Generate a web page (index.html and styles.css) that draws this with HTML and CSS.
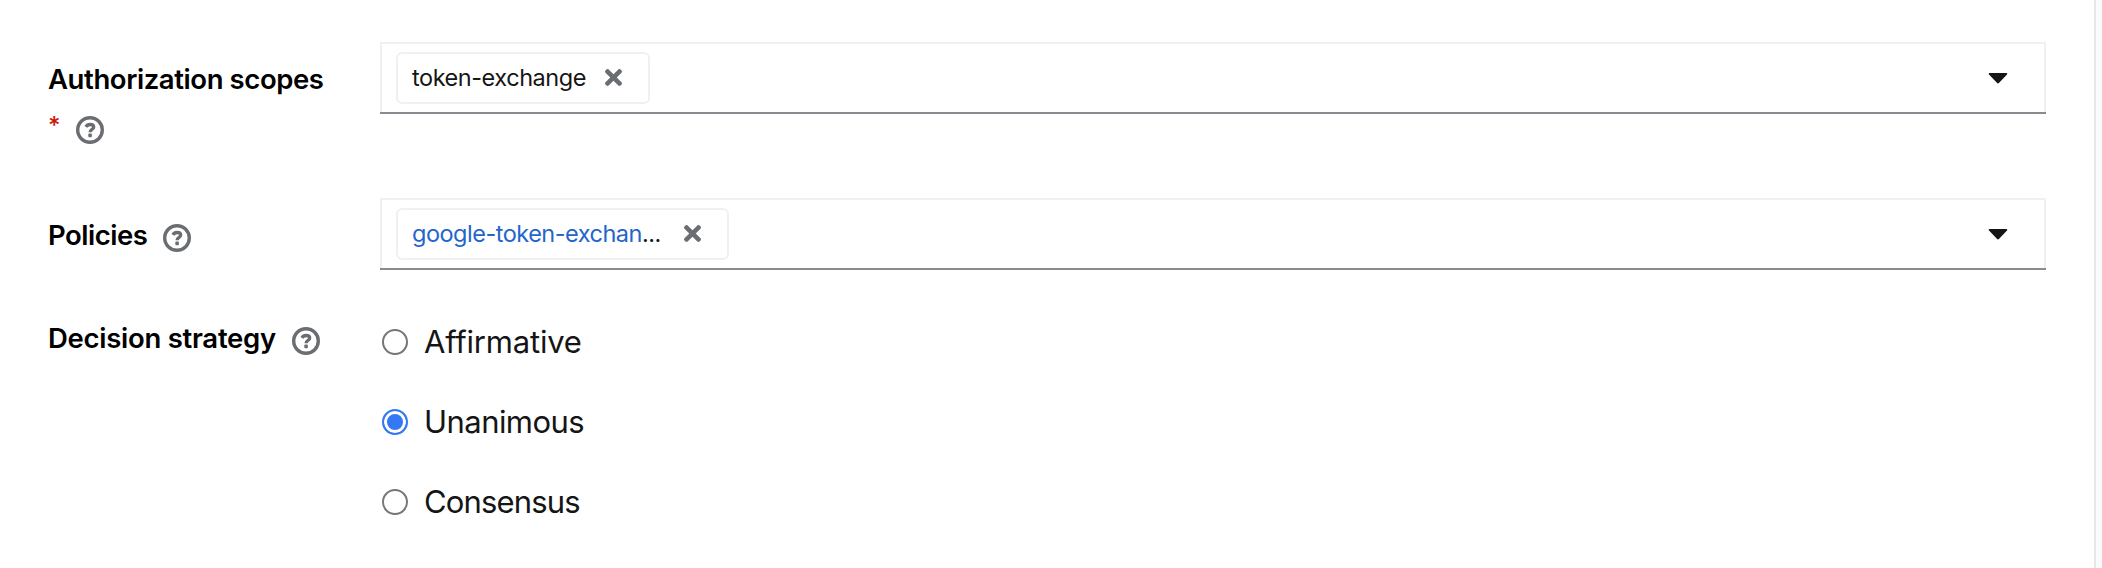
FILE: index.html
```html
<!DOCTYPE html>
<html lang="en">
<head>
<meta charset="utf-8">
<title>Permission details</title>
<link rel="stylesheet" href="styles.css">
</head>
<body>
<svg class="symbols" aria-hidden="true">
  <symbol id="help" viewBox="0 0 28 28">
    <circle cx="14" cy="14" r="12.3" fill="none" stroke="currentColor" stroke-width="3.4"/>
    <path d="M9.9 10.9C10.8 9.3 12.1 8.5 14.1 8.5C16.3 8.5 17.7 9.5 17.7 11.1C17.7 13.6 14.1 13.3 14.1 16.2" fill="none" stroke="currentColor" stroke-width="3.3"/>
    <rect x="12.3" y="17.6" width="3.6" height="3.6" rx="1" fill="currentColor"/>
  </symbol>
  <symbol id="close" viewBox="0 0 352 352">
    <path transform="translate(0 -80)" fill="currentColor" d="M242.72 256l100.07-100.07c12.28-12.28 12.28-32.19 0-44.48l-22.24-22.24c-12.28-12.28-32.19-12.28-44.48 0L176 189.28 75.93 89.21c-12.28-12.28-32.19-12.28-44.48 0L9.21 111.45c-12.28 12.28-12.28 32.19 0 44.48L109.28 256 9.21 356.07c-12.28 12.28-12.28 32.19 0 44.48l22.24 22.24c12.28 12.28 32.2 12.28 44.48 0L176 322.72l100.07 100.07c12.28 12.28 32.2 12.28 44.48 0l22.24-22.24c12.28-12.28 12.28-32.19 0-44.48L242.72 256z"/>
  </symbol>
  <symbol id="caret" viewBox="0 0 20 12">
    <path fill="currentColor" d="M1.7 1H18.3C19.3 1 19.6 2 19 2.6L10.9 11C10.4 11.6 9.6 11.6 9.1 11L1 2.6C.4 2 .7 1 1.7 1Z"/>
  </symbol>
</svg>
<main class="panel">
  <form class="form">
    <div class="group group-scopes">
      <div class="label">
        <span class="label-text t-scopes">Authorization scopes</span>
        <span class="required">*</span><svg class="help help-required"><use href="#help"/></svg>
      </div>
      <div class="select">
        <div class="chip"><span class="chip-text t-token">token-exchange</span><svg class="close"><use href="#close"/></svg></div>
        <svg class="caret"><use href="#caret"/></svg>
      </div>
    </div>
    <div class="group group-policies">
      <div class="label">
        <span class="label-text t-policies">Policies</span><svg class="help"><use href="#help"/></svg>
      </div>
      <div class="select">
        <div class="chip chip-wide"><span class="chip-text t-google"><a class="link">google-token-exchan</a>...</span><svg class="close"><use href="#close"/></svg></div>
        <svg class="caret"><use href="#caret"/></svg>
      </div>
    </div>
    <div class="group group-strategy">
      <div class="label">
        <span class="label-text t-strategy">Decision strategy</span><svg class="help"><use href="#help"/></svg>
      </div>
      <div class="radios">
        <label class="radio"><span class="dot"></span><span class="t-affirmative">Affirmative</span></label>
        <label class="radio"><span class="dot checked"></span><span class="t-unanimous">Unanimous</span></label>
        <label class="radio"><span class="dot"></span><span class="t-consensus">Consensus</span></label>
      </div>
    </div>
  </form>
</main>
</body>
</html>
```
FILE: styles.css
```css
* { box-sizing: border-box; }
body {
  margin: 0;
  height: 568px;
  overflow: hidden;
  background: #fafafa;
  color: #151515;
  font-family: Inter, "Liberation Sans", sans-serif;
}
.symbols { position: absolute; width: 0; height: 0; }
.panel {
  width: 2096px;
  height: 568px;
  padding: 42px 48px 0;
  background: #fff;
  border-right: 2px solid #e7e7e7;
}
.group {
  display: grid;
  grid-template-columns: 332px 1666px;
  align-items: start;
}
.group-scopes { height: 156px; }
.group-policies { height: 118px; }
.label {
  display: flex;
  flex-wrap: wrap;
  align-items: flex-start;
  padding: 16px 32px 0 0;
  color: #000;
  font-size: 27.5px;
  font-weight: 600;
  line-height: 42px;
}
.group-strategy .label { padding-top: 1px; }
.label-text { white-space: nowrap; flex: none; }
.t-scopes { width: 300px; letter-spacing: -0.41px; }
.t-policies { width: 102px; letter-spacing: -0.5px; }
.t-strategy { width: 231px; letter-spacing: -0.27px; }
.help { width: 28px; height: 28px; margin: 10px 0 0 13px; color: #6a6e73; flex: none; }
.required {
  width: 12px;
  color: #c9190b;
  font-size: 24px;
  font-weight: 500;
  line-height: 51px;
}
.help-required { margin: 16px 0 0 16px; }
.select {
  display: flex;
  justify-content: space-between;
  height: 72px;
  padding: 8px 36px 0 14px;
  border: 2px solid #f0f0f0;
  border-bottom: 0;
  position: relative;
}
.select::after {
  content: "";
  position: absolute;
  left: -2px;
  right: -2px;
  bottom: 0;
  height: 2px;
  background: #8a8a90;
}
.chip {
  display: flex;
  justify-content: space-between;
  align-items: flex-start;
  width: 254px;
  height: 52px;
  padding: 0 26px 0 14px;
  border: 2px solid #f0f0f0;
  border-radius: 6px;
}
.chip-wide { width: 333px; }
.chip-text { font-size: 23.5px; line-height: 47px; white-space: nowrap; }
.t-token { letter-spacing: -0.45px; }
.t-google { letter-spacing: -0.5px; }
.link { color: #2465cc; }
.close { width: 17px; height: 17px; margin-top: 15px; color: #6a6e73; }
.caret { width: 20px; height: 12px; margin-top: 20px; color: #151515; }
.radios { display: grid; gap: 32px; padding-top: 2px; }
.radio {
  display: flex;
  align-items: center;
  gap: 16px;
  height: 48px;
  padding-left: 2px;
  font-size: 31px;
  line-height: 48px;
}
.dot { width: 26px; height: 26px; border: 2px solid #767676; border-radius: 50%; background: #fff; }
.dot.checked { border-color: #3478f6; background: #3478f6; box-shadow: inset 0 0 0 3px #fff; }
.t-affirmative { letter-spacing: -0.2px; }
.t-unanimous { letter-spacing: -0.55px; }
.t-consensus { letter-spacing: -0.85px; }
```
